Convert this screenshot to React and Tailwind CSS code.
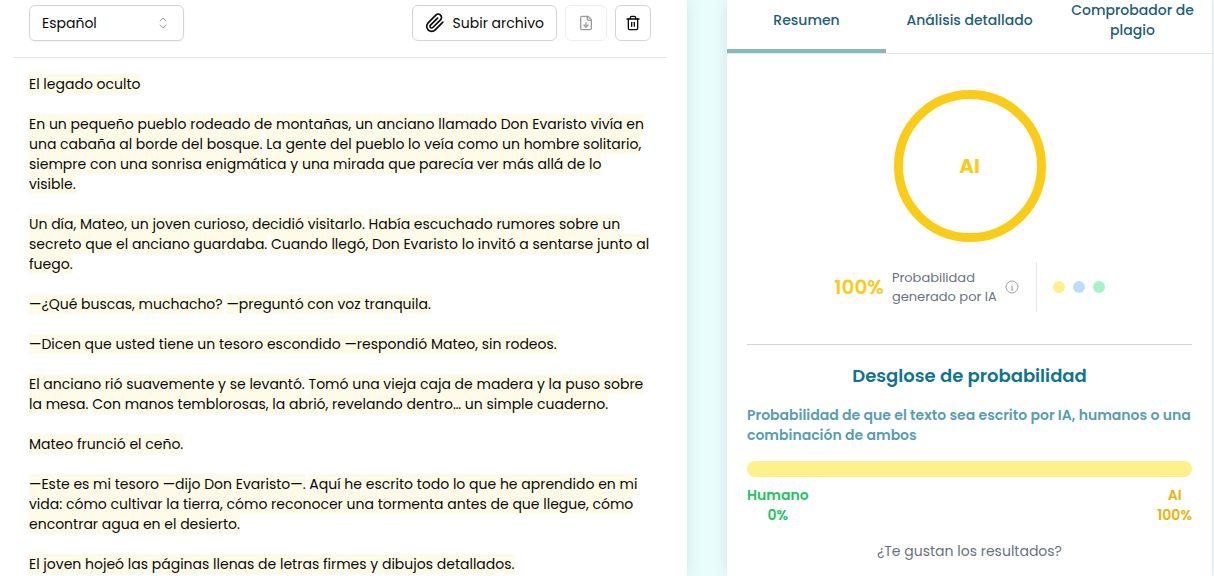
import React from 'react';
import { FiPaperclip, FiTrash2 } from 'react-icons/fi';
import { LuFileDown } from 'react-icons/lu';

const paragraphs = [
  ['El legado oculto'],
  [
    'En un pequeño pueblo rodeado de montañas, un anciano llamado Don Evaristo vivía en una cabaña al borde del bosque.',
    'La gente del pueblo lo veía como un hombre solitario, siempre con una sonrisa enigmática y una mirada que parecía ver más allá de lo visible.',
  ],
  [
    'Un día, Mateo, un joven curioso, decidió visitarlo.',
    'Había escuchado rumores sobre un secreto que el anciano guardaba.',
    'Cuando llegó, Don Evaristo lo invitó a sentarse junto al fuego.',
  ],
  ['—¿Qué buscas, muchacho?', '—preguntó con voz tranquila.'],
  ['—Dicen que usted tiene un tesoro escondido —respondió Mateo, sin rodeos.'],
  [
    'El anciano rió suavemente y se levantó.',
    'Tomó una vieja caja de madera y la puso sobre la mesa.',
    'Con manos temblorosas, la abrió, revelando dentro… un simple cuaderno.',
  ],
  ['Mateo frunció el ceño.'],
  [
    '—Este es mi tesoro —dijo Don Evaristo—.',
    'Aquí he escrito todo lo que he aprendido en mi vida: cómo cultivar la tierra, cómo reconocer una tormenta antes de que llegue, cómo encontrar agua en el desierto.',
  ],
  ['El joven hojeó las páginas llenas de letras firmes y dibujos detallados.'],
];

const SortIcon = () => (
  <svg
    viewBox="0 0 16 16"
    className="pointer-events-none absolute right-[13px] top-2.5 size-4 text-gray-400"
    fill="none"
    stroke="currentColor"
    strokeLinecap="round"
    strokeLinejoin="round"
    aria-hidden="true"
  >
    <path d="M5 6l3-3 3 3M5 10l3 3 3-3" />
  </svg>
);

const InfoIcon = () => (
  <svg viewBox="0 0 14 14" className="size-3.5" fill="none" stroke="currentColor" aria-hidden="true">
    <circle cx="7" cy="7" r="6" />
    <path d="M6 6.5h1.2V10M5.8 10h2.6M6.5 4h1" />
  </svg>
);

const Editor = () => (
  <section className="bg-white pl-[13px] pr-5 shadow-[0_0_15px_rgba(0,0,0,0.1)]">
    <div className="flex items-center justify-between px-4 pt-[5px] pb-4 border-b border-gray-200">
      <div className="relative">
        <select
          aria-label="Idioma"
          className="appearance-none h-9 w-[155px] rounded-md border border-gray-300 bg-white px-3 text-sm shadow-xs"
        >
          <option>Español</option>
        </select>
        <SortIcon />
      </div>
      <div className="flex gap-2">
        <button className="flex h-9 items-center gap-2 rounded-md border border-gray-300 px-3 text-sm">
          <FiPaperclip className="size-5" />
          Subir archivo
        </button>
        <button
          disabled
          aria-label="Descargar"
          className="flex h-9 w-[42px] items-center justify-center rounded-md border border-gray-300 opacity-40"
        >
          <LuFileDown className="size-4" />
        </button>
        <button aria-label="Borrar" className="flex size-9 items-center justify-center rounded-md border border-gray-300">
          <FiTrash2 className="size-4" />
        </button>
      </div>
    </div>
    <div className="flex flex-col gap-5 px-4 pt-4 text-sm leading-5">
      {paragraphs.map((sentences, i) => (
        <p key={i}>
          {sentences.map((s, j) => (
            <React.Fragment key={j}>
              {j > 0 && ' '}
              <span className="bg-[#fefbe8]">{s}</span>
            </React.Fragment>
          ))}
        </p>
      ))}
    </div>
  </section>
);

const Results = () => (
  <section className="bg-white shadow-[0_0_15px_rgba(0,0,0,0.1)]">
    <div
      role="tablist"
      className="grid grid-cols-[159fr_167fr_159fr] border-b border-gray-200 text-sm leading-5 font-medium text-[#1b6079]"
    >
      <button role="tab" aria-selected="true" className="border-b-4 border-[#86b7c6] pb-[9px]">
        Resumen
      </button>
      <button role="tab" aria-selected="false" className="border-b-4 border-transparent pb-[9px]">
        Análisis detallado
      </button>
      <button role="tab" aria-selected="false" className="border-b-4 border-transparent px-4 pb-[9px]">
        Comprobador de plagio
      </button>
    </div>

    <div className="flex flex-col px-5 pt-9">
      <div className="mx-auto flex size-[152px] items-center justify-center rounded-full border-[9px] border-[#facc15] text-xl font-bold text-[#facc15]">
        AI
      </div>

      <div className="mt-5 flex items-center justify-center">
        <span className="text-xl font-semibold text-[#facc15]">100%</span>
        <p className="ml-2 text-[13px] leading-[19px] text-gray-500">
          Probabilidad
          <br />
          generado por IA
        </p>
        <span className="ml-2 text-gray-400">
          <InfoIcon />
        </span>
        <div className="ml-[17px] flex h-[50px] items-center gap-2 border-l border-gray-200 pl-4">
          <span className="size-3 rounded-full bg-[#fef08a]"></span>
          <span className="size-3 rounded-full bg-[#bfdbfe]"></span>
          <span className="size-3 rounded-full bg-[#a7f3c8]"></span>
        </div>
      </div>

      <hr className="mt-8 border-gray-300" />

      <h2 className="mt-[17px] text-center text-lg font-semibold leading-7 text-[#0e7490]">
        Desglose de probabilidad
      </h2>
      <p className="mt-[15px] text-sm font-semibold leading-5 text-[#569eb1]">
        Probabilidad de que el texto sea escrito por IA, humanos o una combinación de ambos
      </p>
      <div className="mt-4 h-4 rounded-full bg-[#fef08a]"></div>
      <div className="mt-2 flex justify-between text-center text-sm font-semibold leading-5">
        <p className="text-[#22c55e]">
          Humano
          <br />
          0%
        </p>
        <p className="text-[#eab308]">
          AI
          <br />
          100%
        </p>
      </div>
      <p className="mt-4 text-center text-sm leading-5 text-gray-500">
        ¿Te gustan los resultados?
      </p>
    </div>
  </section>
);

const App = () => (
  <main className="grid min-h-screen grid-cols-[687fr_485fr] gap-10 bg-[#e9fdfd] pr-0.5 font-['Poppins','Inter',sans-serif] text-[#0a0a0a]">
    <Editor />
    <Results />
  </main>
);

export default App;
